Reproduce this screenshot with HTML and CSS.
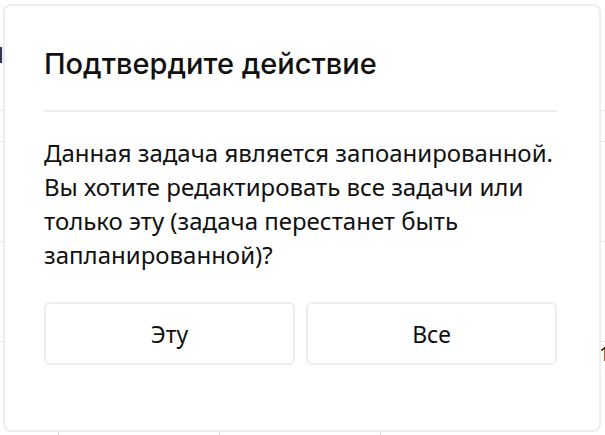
FILE: index.html
```html
<!DOCTYPE html>
<html lang="ru">

<head>
    <meta charset="UTF-8">
    <meta name="viewport" content="width=device-width, initial-scale=1.0">
    <title>Подтвердите действие</title>
    <link rel="stylesheet" href="styles.css">
</head>

<body>
    <!-- календарь под модалкой -->
    <div class="board">
        <div class="row row-head"><span class="mark-left">|</span></div>
        <div class="row row-days"></div>
        <div class="row row-week"></div>
        <div class="row row-week"></div>
        <div class="row row-week cols">
            <span class="mark-right">1</span>
            <div class="col"></div>
            <div class="col"></div>
            <div class="col"></div>
        </div>
    </div>

    <div class="modal">
        <h2 class="modal-title">Подтвердите действие</h2>
        <p class="modal-text">Данная задача является запоанированной. Вы хотите редактировать все задачи или только эту (задача перестанет быть запланированной)?</p>
        <div class="modal-buttons">
            <button class="btn">Эту</button>
            <button class="btn">Все</button>
        </div>
    </div>
</body>

</html>
```

FILE: styles.css
```css
* {
    padding: 0;
    margin: 0;
    box-sizing: border-box;
}

body {
    width: 605px;
    height: 435px;
    overflow: hidden;
    background: #fff;
    font-family: "Open Sans", sans-serif;
    color: #111;
    position: relative;
}

.board {
    display: flex;
    flex-direction: column;
}

.row {
    border-bottom: 1px solid #e6e6e6;
    position: relative;
}

.row-head {
    height: 111px;
}

.row-days {
    height: 31px;
}

.row-week {
    height: 100px;
}

.cols {
    display: flex;
    padding-left: 58px;
}

.col {
    width: 161px;
    border-left: 1px solid #d8d8d8;
}

.mark-left {
    position: absolute;
    left: -2px;
    top: 44px;
    font: bold 16px "DejaVu Sans", sans-serif;
}

.mark-right {
    position: absolute;
    left: 599px;
    top: -2px;
    font: 20px "Noto Sans", sans-serif;
}

.modal {
    position: absolute;
    left: 3px;
    top: 4px;
    width: 598px;
    height: 428px;
    background: #fff;
    border: 2px solid #ededed;
    border-radius: 8px;
    padding: 0 42px 0 39px;
}

.modal-title {
    font-family: "Inter", sans-serif;
    font-weight: 500;
    font-size: 29px;
    line-height: 34px;
    padding: 41px 0 0;
    height: 106px;
    border-bottom: 2px solid #ececec;
}

.modal-text {
    font-family: "Noto Sans", sans-serif;
    font-size: 24px;
    line-height: 34px;
    padding-top: 24px;
    width: 515px;
}

.modal-buttons {
    display: flex;
    gap: 11px;
    margin-top: 30px;
}

.btn {
    flex: 1;
    height: 63px;
    background: #fff;
    border: 2px solid #ededed;
    border-radius: 6px;
    font-family: "Noto Sans", sans-serif;
    font-size: 23px;
    color: #111;
}
```
